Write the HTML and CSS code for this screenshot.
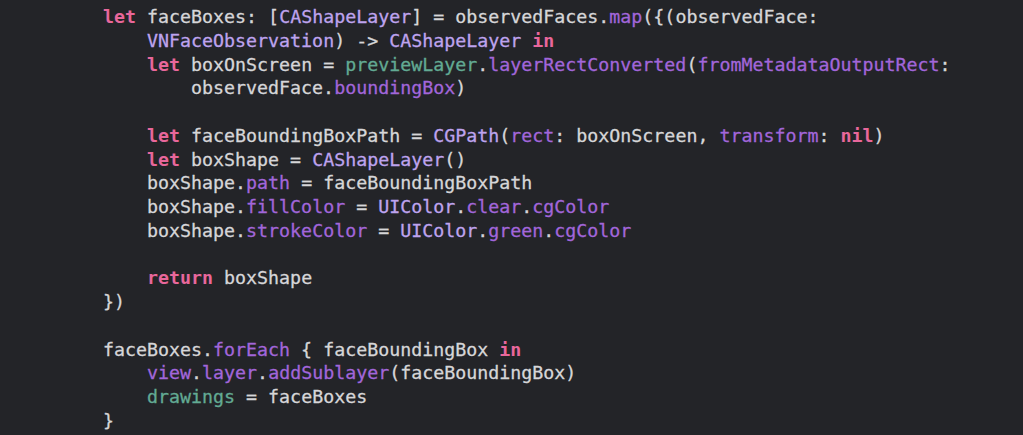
FILE: index.html
```html
<!DOCTYPE html>
<html>
<head>
  <title>faceBoxes</title>
  <link rel="stylesheet" href="styles.css">
</head>
<body>
  <div class="editor">
<pre class="code"><span class="kw">let</span> faceBoxes: [<span class="ty">CAShapeLayer</span>] = observedFaces.<span class="fn">map</span>({(observedFace:
    <span class="ty">VNFaceObservation</span>) -&gt; <span class="ty">CAShapeLayer</span> <span class="kw">in</span>
    <span class="kw">let</span> boxOnScreen = <span class="pj">previewLayer</span>.<span class="fn">layerRectConverted</span>(<span class="fn">fromMetadataOutputRect</span>:
        observedFace.<span class="fn">boundingBox</span>)

    <span class="kw">let</span> faceBoundingBoxPath = <span class="ty">CGPath</span>(<span class="fn">rect</span>: boxOnScreen, <span class="fn">transform</span>: <span class="kw">nil</span>)
    <span class="kw">let</span> boxShape = <span class="ty">CAShapeLayer</span>()
    boxShape.<span class="fn">path</span> = faceBoundingBoxPath
    boxShape.<span class="fn">fillColor</span> = <span class="ty">UIColor</span>.<span class="fn">clear</span>.<span class="fn">cgColor</span>
    boxShape.<span class="fn">strokeColor</span> = <span class="ty">UIColor</span>.<span class="fn">green</span>.<span class="fn">cgColor</span>

    <span class="kw">return</span> boxShape
})

faceBoxes.<span class="fn">forEach</span> { faceBoundingBox <span class="kw">in</span>
    <span class="fn">view</span>.<span class="fn">layer</span>.<span class="fn">addSublayer</span>(faceBoundingBox)
    <span class="pj">drawings</span> = faceBoxes
}</pre>
  </div>
</body>
</html>
```

FILE: styles.css
```css
html, body {
  margin: 0;
  padding: 0;
  height: 100%;
  background-color: #232428;
}
.editor {
  height: 100%;
  overflow: hidden;
  padding: 5px 0 0 103px;
  box-sizing: border-box;
}
.code {
  margin: 0;
  font-family: "DejaVu Sans Mono", "Liberation Mono", monospace;
  font-size: 18.3px;
  line-height: 23.76px;
  color: #d6d6d8;
  -webkit-text-stroke: 0.3px currentColor;
}
.kw {
  color: #e8679b;
  font-weight: bold;
  -webkit-text-stroke: 0;
}
.ty {
  color: #bea3ee;
}
.fn {
  color: #a266da;
}
.pj {
  color: #62aa93;
}
```
